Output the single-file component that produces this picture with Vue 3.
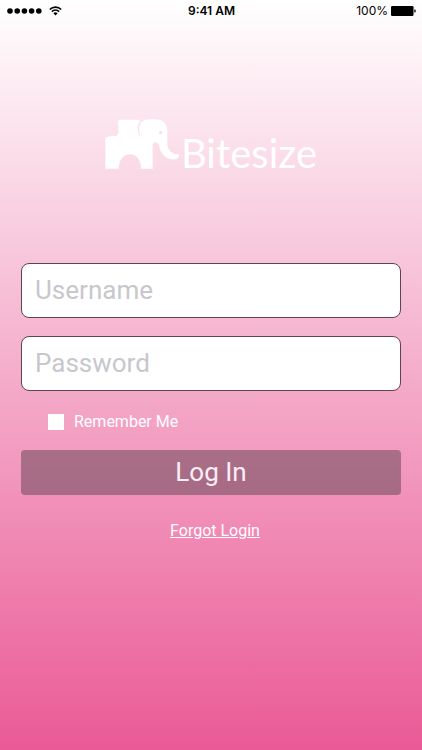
<script setup>
import { ref } from 'vue'

const username = ref('')
const password = ref('')
const remember = ref(false)
</script>

<template>
  <div class="screen">
    <header class="status">
      <div class="signal">
        <svg class="dots" viewBox="0 0 35 6" aria-hidden="true">
          <circle v-for="n in 5" :key="n" :cx="n * 7.2 - 4.2" cy="3" r="2.8" />
        </svg>
        <svg class="wifi" viewBox="0 0 13 10" aria-hidden="true">
          <path d="M.8 3.5a8.2 8.2 0 0 1 11.4 0M2.9 5.6a5.2 5.2 0 0 1 7.2 0" />
          <path class="solid" d="M4.4 7.2a3 3 0 0 1 4.2 0L6.5 9.5z" />
        </svg>
      </div>
      <span class="time">9:41 AM</span>
      <div class="power">
        <span>100%</span>
        <svg class="battery" viewBox="0 0 25 10" aria-hidden="true">
          <rect width="22.5" height="10" rx="1.2" />
          <path d="M23.3 3.3q1.5.2 1.5 1.7t-1.5 1.7z" />
        </svg>
      </div>
    </header>

    <main class="content">
      <h1 class="brand">
        <svg class="elephant" viewBox="30 28 222 150" aria-hidden="true">
          <path
            d="M31 177V82q6 2 10-3 6 3 10-1l11 1q3 0 4-3l6-9-3-9 3-6-4-5 1-10q0-7 6-7h50q7 0 10 4-6 7-7 17-1 15 5 28l3 1q-6-20-2-33 7-19 31-18h15c24 0 37 14 37 35v20c0 13-1 25 4 34 7 12 17 17 29 15q3 2 1 7-2 8-12 9c-24 2-43-15-47-43q-3-8-11-8-8 0-8 9v70h-35c0-26-13-43-33-43s-33 17-34 43z"
          />
          <circle class="eye" cx="197" cy="69" r="5" />
        </svg>
        <span class="name">Bitesize</span>
      </h1>

      <form class="form" @submit.prevent>
        <input v-model="username" class="field" type="text" placeholder="Username" aria-label="Username" />
        <input v-model="password" class="field" type="password" placeholder="Password" aria-label="Password" />
        <label class="remember">
          <input v-model="remember" class="check" type="checkbox" />
          <span>Remember Me</span>
        </label>
        <button class="login" type="submit">Log In</button>
        <a class="forgot" href="#">Forgot Login</a>
      </form>
    </main>
  </div>
</template>

<style>
body {
  margin: 0;
}
</style>

<style scoped>
.screen {
  min-height: 100vh;
  background: linear-gradient(#ffffff, #ea5a96);
  font-family: Roboto, "Liberation Sans", sans-serif;
  color: #fff;
}

.status {
  display: grid;
  grid-template-columns: 1fr auto 1fr;
  align-items: center;
  height: 22px;
  padding: 0 6px 0 7px;
  color: #000;
  font: 12px/22px Inter, sans-serif;
}

.signal,
.power {
  display: flex;
  align-items: center;
}

.signal {
  gap: 7px;
}

.power {
  justify-content: flex-end;
  gap: 3px;
}

.dots {
  width: 35px;
  height: 6px;
}

.wifi {
  width: 13px;
  height: 10px;
  fill: none;
  stroke: #000;
  stroke-width: 1.7;
}

.wifi .solid {
  fill: #000;
  stroke: none;
}

.time {
  font-weight: 600;
}

.battery {
  width: 25px;
  height: 10px;
}

.content {
  padding: 96px 21px 0;
}

.brand {
  display: flex;
  justify-content: center;
  align-items: flex-start;
  gap: 2px;
  height: 52px;
  margin: 0 0 93px;
  padding-top: 1px;
  box-sizing: border-box;
  font: 400 40px/68px Lato, sans-serif;
}

.elephant {
  width: 74px;
  height: 50px;
  fill: #fff;
}

.elephant .eye {
  fill: #fadfea;
}

.form {
  display: flex;
  flex-direction: column;
}

.field {
  box-sizing: border-box;
  width: 100%;
  height: 55px;
  margin: 0 0 18px;
  padding: 0 13px 2px;
  border: 1px solid #5c4450;
  border-radius: 8px;
  outline: none;
  background: #fff;
  color: #333;
  font: 400 26px/32px Roboto, sans-serif;
}

.field::placeholder {
  color: #c7c7cd;
  opacity: 1;
}

.remember {
  display: flex;
  align-items: center;
  align-self: flex-start;
  gap: 10px;
  margin: 2px 0 18px 27px;
  font-size: 16px;
  line-height: 21px;
}

.check {
  appearance: none;
  width: 16px;
  height: 16px;
  margin: 0;
  background: #fff;
}

.check:checked {
  border: 4px solid #fff;
  background: #ea5a96;
}

.login {
  height: 45px;
  padding: 0;
  border: 0;
  border-radius: 4px;
  background: rgba(94, 66, 80, 0.5);
  color: #fdeef5;
  font: 400 26px/45px Roboto, sans-serif;
}

.forgot {
  align-self: center;
  margin: 26px 0 0 8px;
  color: #fff;
  font-size: 16px;
  line-height: 20px;
}
</style>
